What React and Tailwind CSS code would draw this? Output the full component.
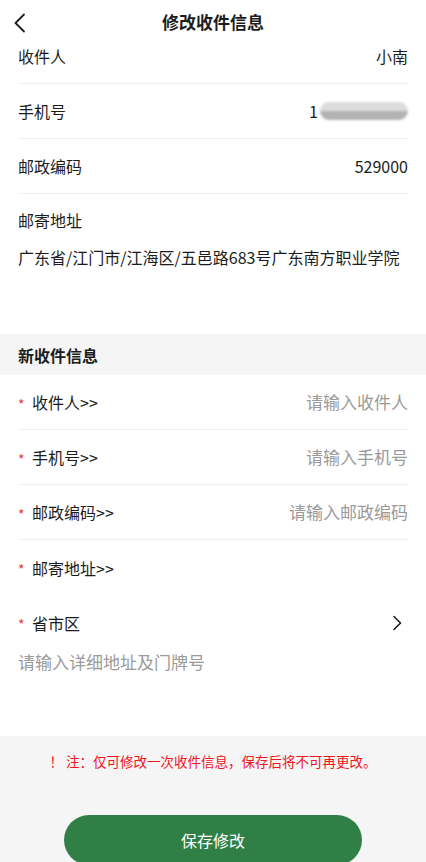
import { useState } from 'react';

const font = { fontFamily: '"Noto Sans CJK SC", "Noto Sans", sans-serif' };

function InfoRow({ label, children, first }) {
  return (
    <div className={`flex justify-between border-b border-[#f0f0f0] ${first ? 'h-[40px] items-start' : 'h-[55px] items-center'}`}>
      <span className="leading-6">{label}</span>
      {children}
    </div>
  );
}

function Star() {
  return <span className="text-[#e53935] text-[14px] w-[14px] leading-none mt-[2px] self-start pt-[20px]">*</span>;
}

function InputRow({ label, placeholder, value, onChange, border = true }) {
  return (
    <div className={`flex items-center h-[55px] ${border ? 'border-b border-[#f0f0f0]' : ''}`}>
      <Star />
      <span className="leading-6 shrink-0">{label}</span>
      {placeholder && (
        <input
          value={value}
          onChange={e => onChange(e.target.value)}
          placeholder={placeholder}
          className="flex-1 min-w-0 text-right text-[17px] outline-none bg-transparent placeholder:text-[#9a9a9a]"
        />
      )}
    </div>
  );
}

export default function App() {
  const [form, setForm] = useState({ nama: '', hp: '', kode: '', detail: '' });
  const set = key => v => setForm({ ...form, [key]: v });

  return (
    <div className="w-[426px] h-[862px] bg-white text-[16px] text-[#1c1c1c] overflow-hidden flex flex-col" style={font}>
      <div className="h-[44px] flex items-center justify-center relative shrink-0">
        <svg className="absolute left-[12px] top-[13px]" width="16" height="20" viewBox="0 0 16 20" fill="none">
          <path d="M12 1.5 L3.5 10 L12 18.5" stroke="#1c1c1c" strokeWidth="1.8" strokeLinecap="round" strokeLinejoin="round" />
        </svg>
        <h1 className="text-[17px] font-bold">修改收件信息</h1>
      </div>

      <div className="px-[18px] shrink-0">
        <InfoRow label="收件人" first>
          <span className="leading-6">小南</span>
        </InfoRow>
        <InfoRow label="手机号">
          <span className="flex items-center">
            <span>1</span>
            <span className="ml-[2px] w-[88px] h-[18px] rounded-full overflow-hidden flex flex-col blur-[1px]">
              <span className="h-1/2 bg-[#dcdcdc]" />
              <span className="h-1/2 bg-[#b3b3b3]" />
            </span>
          </span>
        </InfoRow>
        <InfoRow label="邮政编码">
          <span>529000</span>
        </InfoRow>
        <div className="pt-[14px] pb-[65px]">
          <p className="leading-6">邮寄地址</p>
          <p className="leading-6 mt-[13px] whitespace-nowrap">广东省/江门市/江海区/五邑路683号广东南方职业学院</p>
        </div>
      </div>

      <div className="h-[41px] shrink-0 bg-[#f5f5f5] px-[18px] flex items-center font-bold">新收件信息</div>

      <div className="px-[18px] shrink-0">
        <InputRow label="收件人>>" placeholder="请输入收件人" value={form.nama} onChange={set('nama')} />
        <InputRow label="手机号>>" placeholder="请输入手机号" value={form.hp} onChange={set('hp')} />
        <InputRow label="邮政编码>>" placeholder="请输入邮政编码" value={form.kode} onChange={set('kode')} />
        <InputRow label="邮寄地址>>" border={false} />
        <div className="flex items-center h-[55px]">
          <Star />
          <span className="leading-6 flex-1">省市区</span>
          <svg className="mr-[5px]" width="11" height="16" viewBox="0 0 11 16" fill="none">
            <path d="M2 1.5 L8.5 8 L2 14.5" stroke="#1c1c1c" strokeWidth="1.6" strokeLinecap="round" strokeLinejoin="round" />
          </svg>
        </div>
        <input
          value={form.detail}
          onChange={e => set('detail')(e.target.value)}
          placeholder="请输入详细地址及门牌号"
          className="w-full h-[26px] mt-[-3px] text-[17px] outline-none placeholder:text-[#9a9a9a]"
        />
      </div>

      <div className="flex-1 shrink-0 bg-[#f5f5f5] mt-[61px] flex flex-col items-center">
        <p className="text-[13.5px] text-[#f0141e] mt-[15px] leading-5">！ 注：仅可修改一次收件信息，保存后将不可再更改。</p>
        <button className="mt-[44px] w-[298px] h-[50px] shrink-0 rounded-full bg-[#2f7f46] text-white text-[16px]">保存修改</button>
      </div>
    </div>
  );
}
